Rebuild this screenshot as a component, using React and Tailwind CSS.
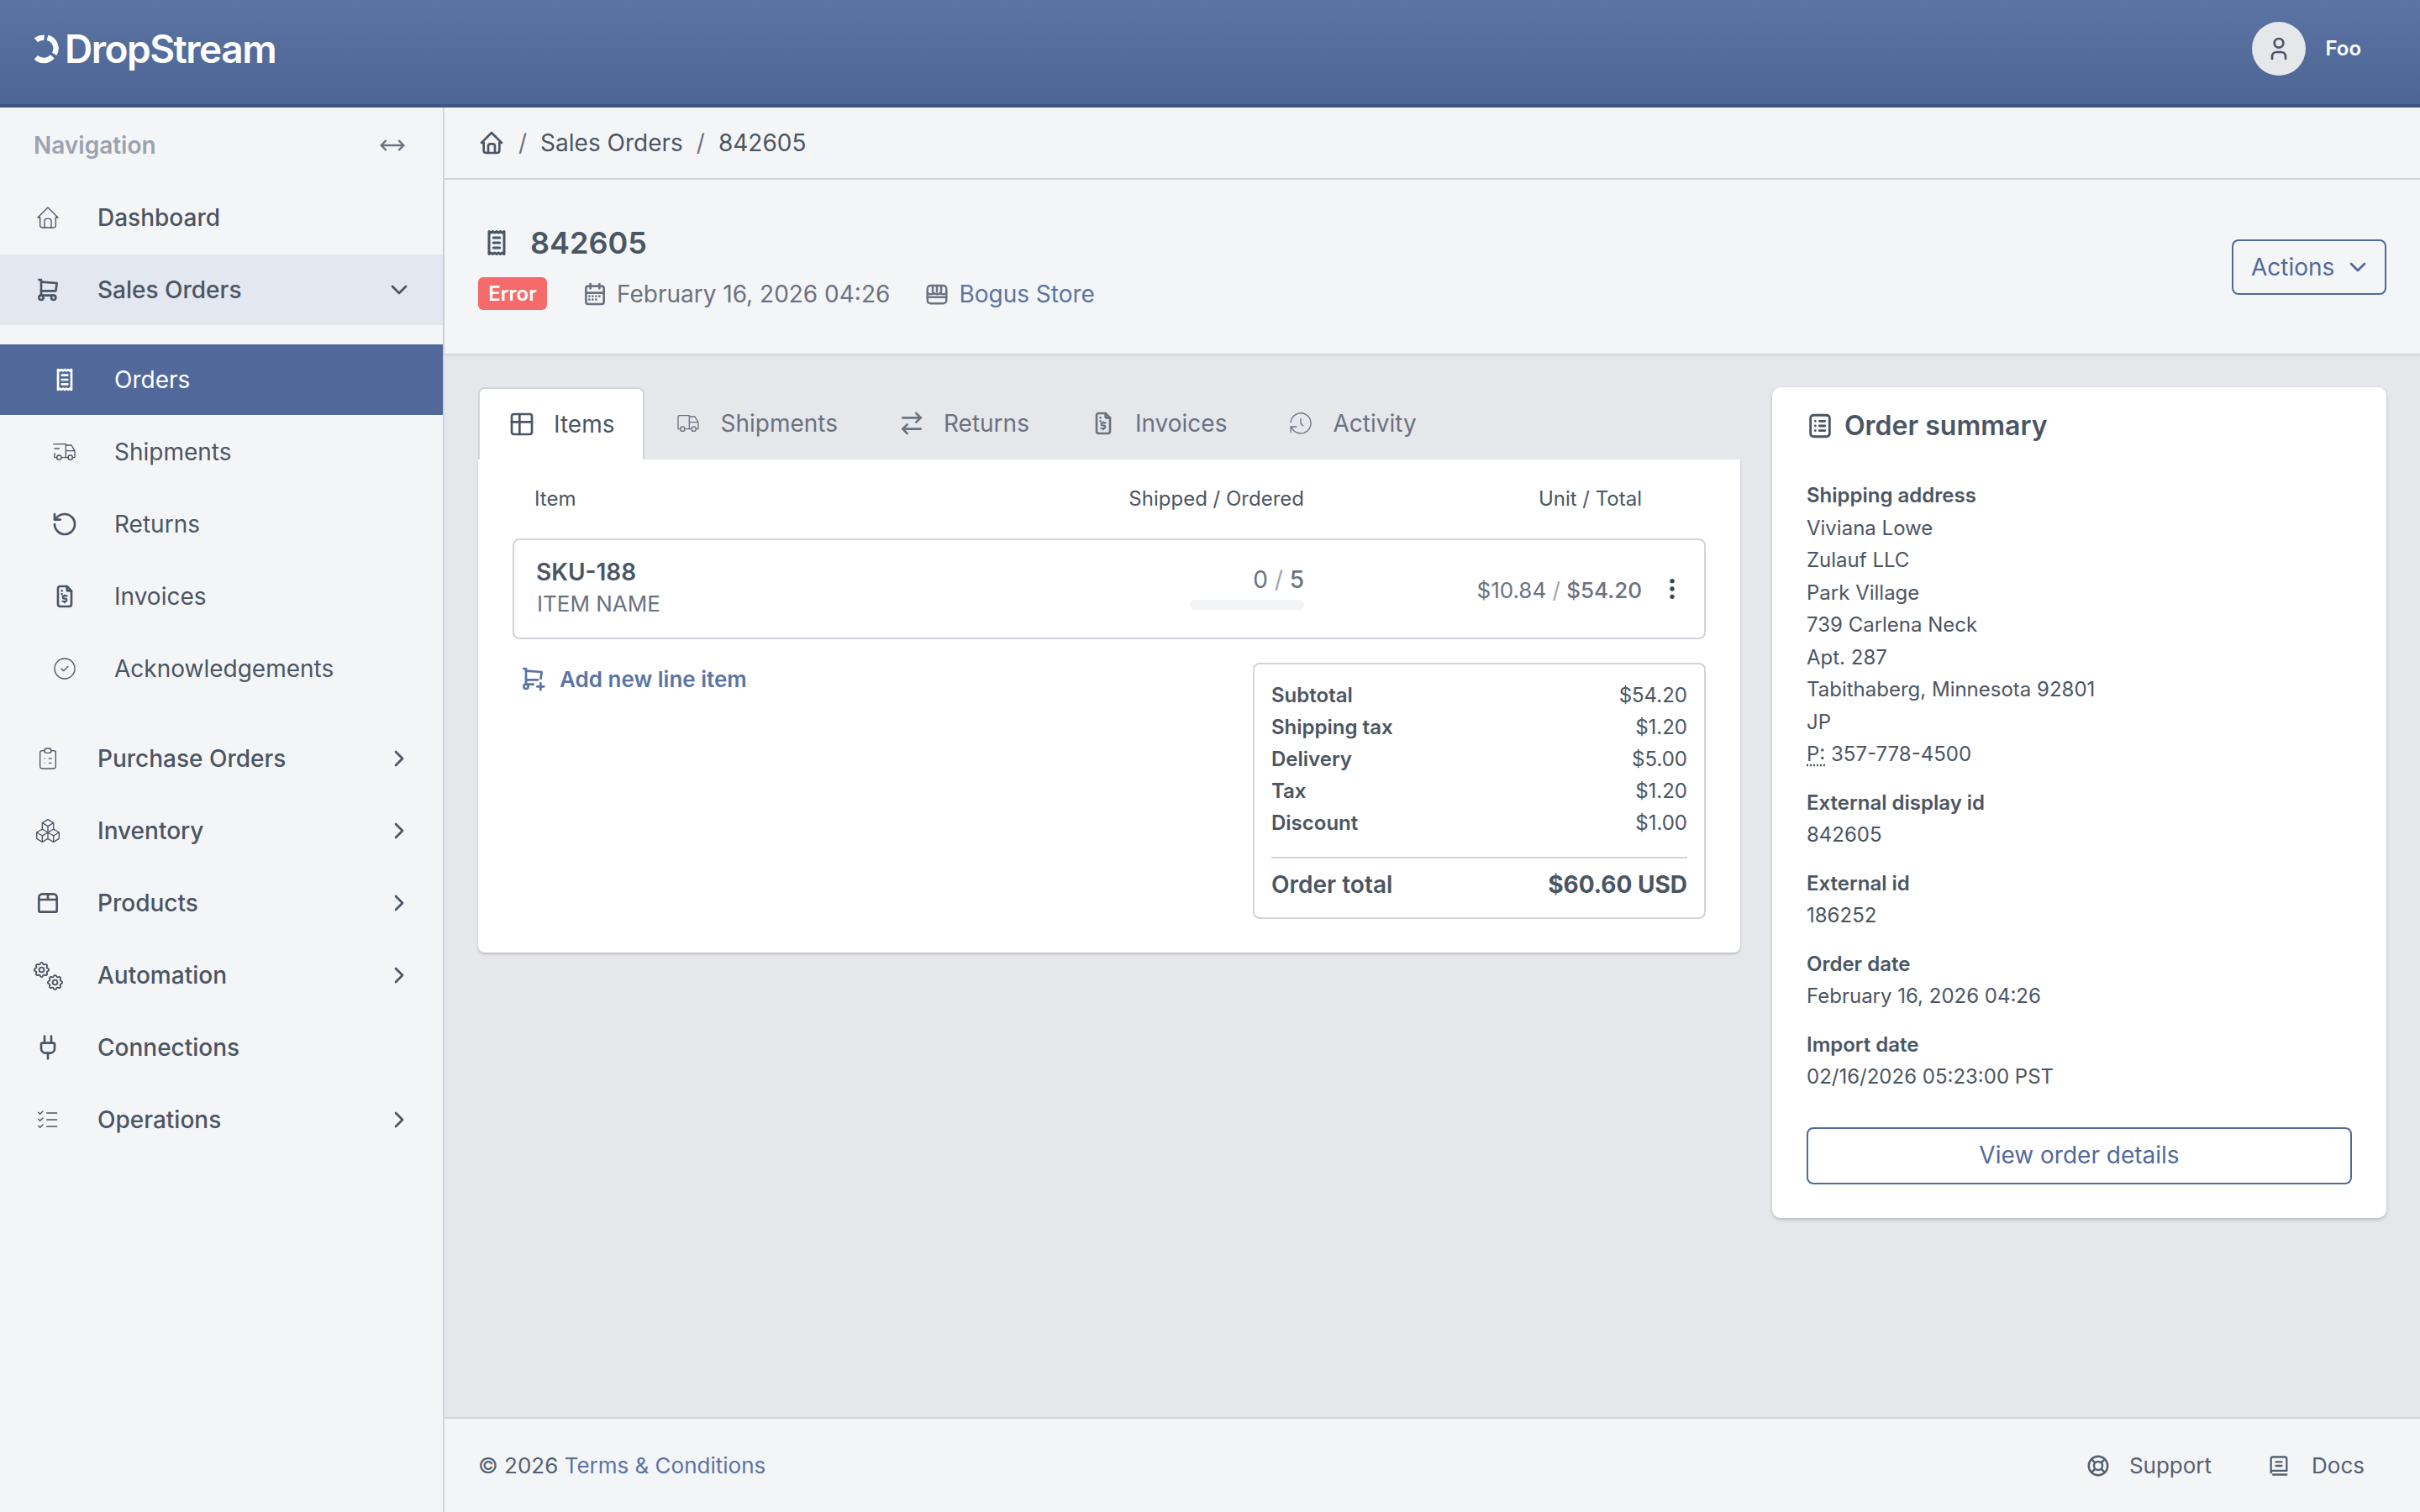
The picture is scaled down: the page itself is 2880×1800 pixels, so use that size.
import {
  TbHome, TbShoppingCart, TbTruckDelivery, TbCircleCheck, TbClipboardList, TbPackages,
  TbListCheck, TbTable, TbTruck, TbHistory, TbCalendarMonth, TbLifebuoy, TbUser,
  TbShoppingCartPlus, TbDotsVertical, TbChevronDown, TbChevronRight, TbSettings,
} from 'react-icons/tb';
import { ArrowRightLeft, MoveHorizontal, Plug, RotateCcw } from 'lucide-react';

// Icons the packages don't have in this exact shape
const Receipt = ({ className }) => (
  <svg viewBox="0 0 24 24" fill="none" stroke="currentColor" strokeWidth="2" strokeLinejoin="round" strokeLinecap="round" className={className}>
    <path d="M6 3l1.5 1L9 3l1.5 1L12 3l1.5 1L15 3l1.5 1L18 3v18l-1.5-1L15 21l-1.5-1L12 21l-1.5-1L9 21l-1.5-1L6 21V3z" />
    <path d="M9.5 8h5M9.5 12h5M9.5 16h5" />
  </svg>
);

const FileInvoice = ({ className }) => (
  <svg viewBox="0 0 24 24" fill="none" stroke="currentColor" strokeWidth="2" strokeLinejoin="round" strokeLinecap="round" className={className}>
    <path d="M14 3H8a2 2 0 0 0-2 2v14a2 2 0 0 0 2 2h8a2 2 0 0 0 2-2V7l-4-4z" />
    <path d="M14 3v3a1 1 0 0 0 1 1h3" />
    <path d="M9.5 7h.01M9.5 10h.01" />
    <path d="M14 11.5h-2.5a1.25 1.25 0 0 0 0 2.5h1a1.25 1.25 0 0 1 0 2.5H10M12 17.5v-.5M12 11.5V11" strokeWidth="1.6" />
  </svg>
);

const ProductBox = ({ className }) => (
  <svg viewBox="0 0 24 24" fill="none" stroke="currentColor" strokeWidth="2" strokeLinejoin="round" strokeLinecap="round" className={className}>
    <path d="M7 4h10a3 3 0 0 1 3 3v12a1 1 0 0 1-1 1H5a1 1 0 0 1-1-1V7a3 3 0 0 1 3-3z" />
    <path d="M4 9h16M12 4v5" />
  </svg>
);

const Gears = ({ className }) => (
  <span className={`relative inline-block ${className}`}>
    <TbSettings className="absolute left-[-3px] top-[-2px] w-[23px] h-[23px]" />
    <TbSettings className="absolute left-[13px] top-[13px] w-[23px] h-[23px]" />
  </span>
);

const Store = ({ className }) => (
  <svg viewBox="0 0 24 24" fill="none" stroke="currentColor" strokeWidth="2" strokeLinejoin="round" strokeLinecap="round" className={className}>
    <rect x="3" y="4" width="18" height="17" rx="3" />
    <path d="M3 11c1.5 1.6 4.5 1.6 6 0 1.500 1.600 4.500 1.600 6 0 1.500 1.600 4.500 1.600 6 0M3 15h18M8 4v6M12 4v6M16 4v6" />
  </svg>
);

const SummaryIcon = ({ className }) => (
  <svg viewBox="0 0 24 24" fill="none" stroke="currentColor" strokeWidth="2" strokeLinejoin="round" strokeLinecap="round" className={className}>
    <rect x="4" y="3" width="16" height="18" rx="2.500" />
    <path d="M8 8h.01M8 12h.01M8 16h.01M11.500 8H16M11.500 12H16M11.500 16H16" />
  </svg>
);

const Book = ({ className }) => (
  <svg viewBox="0 0 24 24" fill="none" stroke="currentColor" strokeWidth="2" strokeLinejoin="round" strokeLinecap="round" className={className}>
    <path d="M6 21h14M20 17H6a2 2 0 0 0-2 2V5a2 2 0 0 1 2-2h12a2 2 0 0 1 2 2v12z" />
    <path d="M9 8h6M9 12h6" />
  </svg>
);

const Logo = () => (
  <svg viewBox="0 0 32 36" className="w-[31px] h-[36px]" fill="none" stroke="white" strokeWidth="6.500">
    <path d="M3 7.500A13.500 13.500 0 0 1 13 4.500" />
    <path d="M17 4.500a13.500 13.500 0 0 1 8.500 20" />
    <path d="M23 27.500A13.500 13.500 0 0 1 3 28.500" />
  </svg>
);

const SALES_CHILDREN = [
  { label: 'Orders', icon: Receipt, active: true },
  { label: 'Shipments', icon: TbTruckDelivery },
  { label: 'Returns', icon: RotateCcw },
  { label: 'Invoices', icon: FileInvoice },
  { label: 'Acknowledgements', icon: TbCircleCheck },
];

const NAV_BOTTOM = [
  { label: 'Purchase Orders', icon: TbClipboardList, chevron: true },
  { label: 'Inventory', icon: TbPackages, chevron: true },
  { label: 'Products', icon: ProductBox, chevron: true },
  { label: 'Automation', icon: Gears, chevron: true },
  { label: 'Connections', icon: Plug },
  { label: 'Operations', icon: TbListCheck, chevron: true },
];

const TABS = [
  { label: 'Shipments', icon: TbTruck },
  { label: 'Returns', icon: ArrowRightLeft },
  { label: 'Invoices', icon: FileInvoice },
  { label: 'Activity', icon: TbHistory },
];

const TOTALS = [
  ['Subtotal', '$54.20'],
  ['Shipping tax', '$1.20'],
  ['Delivery', '$5.00'],
  ['Tax', '$1.20'],
  ['Discount', '$1.00'],
];

const ADDRESS = ['Viviana Lowe', 'Zulauf LLC', 'Park Village', '739 Carlena Neck', 'Apt. 287', 'Tabithaberg, Minnesota 92801', 'JP'];

const DETAILS = [
  ['External display id', '842605'],
  ['External id', '186252'],
  ['Order date', 'February 16, 2026 04:26'],
  ['Import date', '02/16/2026 05:23:00 PST'],
];

function NavRow({ item }) {
  const Icon = item.icon;
  return (
    <div className="flex items-center h-[84px] mb-[2px] pl-[41px] pr-[36px]">
      <Icon className="w-[32px] h-[32px] shrink-0" strokeWidth={item.icon === Plug ? 2 : undefined} />
      <span className="ml-[43px] flex-1">{item.label}</span>
      {item.chevron && <TbChevronRight className="w-[32px] h-[32px]" />}
    </div>
  );
}

function Sidebar() {
  return (
    <aside className="w-[529px] shrink-0 border-r-2 border-[#d1d5db] bg-[#f4f5f7] text-[28px] font-medium text-[#4b5563]">
      <div className="flex items-center justify-between h-[89px] pl-[40px] pr-[44px] text-[#9ca3af] font-semibold">
        <span>Navigation</span>
        <MoveHorizontal className="w-[32px] h-[32px] text-[#6b7280]" strokeWidth={1.75} />
      </div>
      <NavRow item={{ label: 'Dashboard', icon: TbHome }} />
      <div className="flex items-center h-[84px] pl-[41px] pr-[36px] bg-[#e2e7f0]">
        <TbShoppingCart className="w-[32px] h-[32px] shrink-0" />
        <span className="ml-[43px] flex-1">Sales Orders</span>
        <TbChevronDown className="w-[32px] h-[32px]" />
      </div>
      <div className="mt-[23px] mb-[23px] font-normal">
        {SALES_CHILDREN.map((item) => {
          const Icon = item.icon;
          return (
            <div key={item.label} className={`flex items-center h-[84px] mb-[2px] pl-[61px] ${item.active ? 'bg-[#51699a] text-white' : ''}`}>
              <Icon className="w-[32px] h-[32px] shrink-0" strokeWidth={item.icon === RotateCcw ? 2 : undefined} />
              <span className="ml-[43px]">{item.label}</span>
            </div>
          );
        })}
      </div>
      {NAV_BOTTOM.map((item) => <NavRow key={item.label} item={item} />)}
    </aside>
  );
}

function ItemsCard() {
  return (
    <div className="flex-1 min-w-0">
      <div className="flex h-[86px] text-[28px] text-[#6b7280]">
        <div className="flex items-center gap-[22px] px-[34px] bg-white text-[#4b5563] border-2 border-b-0 border-[#d1d5db] rounded-t-[8px]">
          <TbTable className="w-[32px] h-[32px]" />
          Items
        </div>
        {TABS.map((tab) => {
          const Icon = tab.icon;
          return (
            <div key={tab.label} className="flex items-center gap-[22px] px-[36px]">
              <Icon className="w-[32px] h-[32px]" strokeWidth={tab.icon === ArrowRightLeft ? 2 : undefined} />
              {tab.label}
            </div>
          );
        })}
      </div>
      <div className="bg-white rounded-b-[8px] shadow-[0_2px_3px_rgba(0,0,0,0.18)] px-[41px] pb-[40px] text-[#4b5563]">
        <div className="flex items-center h-[94px] pl-[26px] pr-[76px] text-[24px]">
          <span className="flex-1">Item</span>
          <span className="w-[300px] text-right">Shipped / Ordered</span>
          <span className="w-[402px] text-right">Unit / Total</span>
        </div>
        <div className="flex items-center h-[120px] border-2 border-[#d1d5db] rounded-[8px] pl-[26px] pr-[22px]">
          <div className="flex-1">
            <div className="text-[28px] font-semibold leading-[36px]">SKU-188</div>
            <div className="text-[26px] leading-[40px] text-[#6b7280] ml-[1px]">ITEM NAME</div>
          </div>
          <div className="w-[300px] flex flex-col items-end mb-[4px]">
            <div className="text-[28px] text-[#6b7280] leading-[36px]">0 <span className="text-[#9ca3af]">/</span> <span className="font-medium">5</span></div>
            <div className="w-[136px] h-[12px] rounded-full bg-[#f3f4f6] mt-[6px]"></div>
          </div>
          <div className="w-[402px] text-right text-[26px] text-[#6b7280] mt-[2px]">
            $10.84 <span className="text-[#9ca3af]">/</span> <span className="font-medium">$54.20</span>
          </div>
          <div className="w-[52px] flex justify-end">
            <TbDotsVertical className="w-[32px] h-[32px] text-[#374151]" />
          </div>
        </div>
        <div className="flex justify-between mt-[28px]">
          <div className="flex items-center gap-[16px] h-[34px] mt-[2px] pl-[8px] text-[26px] font-semibold text-[#5b74a3]">
            <TbShoppingCartPlus className="w-[32px] h-[32px]" />
            Add new line item
          </div>
          <div className="w-[539px] border-2 border-[#d1d5db] rounded-[8px] px-[20px] pt-[18px] pb-[18px]">
            {TOTALS.map(([label, value]) => (
              <div key={label} className="flex justify-between text-[24px] leading-[38px]">
                <span className="font-semibold">{label}</span>
                <span>{value}</span>
              </div>
            ))}
            <div className="border-t-2 border-[#d1d5db] mt-[21px] pt-[10px] flex justify-between text-[28px] leading-[42px]">
              <span className="font-semibold">Order total</span>
              <span className="font-bold">$60.60 USD</span>
            </div>
          </div>
        </div>
      </div>
    </div>
  );
}

function SummaryCard() {
  return (
    <div className="w-[731px] shrink-0 self-start bg-white rounded-[10px] shadow-[0_2px_4px_rgba(0,0,0,0.2)] px-[41px] pt-[24px] pb-[40px] text-[24px] leading-[38.500px] text-[#4b5563]">
      <div className="flex items-center gap-[12px] h-[44px] mb-[42px] text-[32px] font-semibold">
        <SummaryIcon className="w-[34px] h-[34px] -ml-[1px]" />
        Order summary
      </div>
      <div className="font-semibold">Shipping address</div>
      {ADDRESS.map((line) => <div key={line}>{line}</div>)}
      <div><span className="underline decoration-dotted underline-offset-4">P:</span> 357-778-4500</div>
      {DETAILS.map(([label, value]) => (
        <div key={label} className="mt-[19px]">
          <div className="font-semibold">{label}</div>
          <div>{value}</div>
        </div>
      ))}
      <div className="flex items-center justify-center h-[68px] mt-[40px] border-2 border-[#51699a] rounded-[8px] text-[28px] text-[#51699a]">
        View order details
      </div>
    </div>
  );
}

export default function App() {
  return (
    <div className="flex flex-col h-screen font-['Inter',sans-serif] text-[#4b5563] overflow-hidden">
      <header className="flex items-center justify-between shrink-0 h-[128px] pb-[8px] pl-[40px] pr-[70px] border-b-4 border-[#3f5680] bg-gradient-to-b from-[#5b74a3] to-[#4c6594]">
        <div className="flex items-center gap-[6px]">
          <Logo />
          <span className="text-[46px] font-semibold text-white tracking-[-1.500px] leading-none">DropStream</span>
        </div>
        <div className="flex items-center gap-[23px]">
          <div className="flex items-center justify-center w-[64px] h-[64px] rounded-full bg-[#e5e7eb]">
            <TbUser className="w-[32px] h-[32px] text-[#4b5563]" />
          </div>
          <span className="text-[24px] font-semibold text-white">Foo</span>
        </div>
      </header>
      <div className="flex flex-1 min-h-0">
        <Sidebar />
        <main className="flex flex-col flex-1 min-w-0 bg-[#e5e7eb]">
          <div className="flex items-center h-[86px] pl-[40px] border-b-2 border-[#d1d5db] bg-[#f4f5f7] text-[28px] shrink-0">
            <TbHome className="w-[32px] h-[32px]" />
            <span className="mx-[16px] text-[#6b7280]">/</span>
            <span>Sales Orders</span>
            <span className="mx-[16px] text-[#6b7280]">/</span>
            <span>842605</span>
          </div>
          <div className="flex items-center justify-between shrink-0 h-[207px] pl-[40px] pr-[40px] bg-[#f4f5f7] shadow-[0_2px_3px_rgba(0,0,0,0.1)]">
            <div>
              <div className="flex items-center gap-[22px] h-[48px] ml-[4px] text-[36px] font-semibold">
                <Receipt className="w-[36px] h-[36px]" />
                842605
              </div>
              <div className="flex items-center mt-[16px] text-[28px] text-[#6b7280]">
                <span className="flex items-center justify-center w-[82px] h-[39px] rounded-[6px] bg-[#f56b6b] text-[24px] font-semibold text-white">Error</span>
                <TbCalendarMonth className="w-[32px] h-[32px] ml-[41px]" />
                <span className="ml-[10px]">February 16, 2026 04:26</span>
                <Store className="w-[30px] h-[30px] ml-[41px]" />
                <span className="ml-[11px] text-[#5b74a3]">Bogus Store</span>
              </div>
            </div>
            <div className="flex items-center h-[66px] w-[184px] pl-[21px] gap-[12px] border-2 border-[#51699a] rounded-[8px] text-[28px] text-[#51699a]">
              Actions
              <TbChevronDown className="w-[32px] h-[32px]" />
            </div>
          </div>
          <div className="flex flex-1 min-h-0 gap-[38px] pt-[40px] px-[40px]">
            <ItemsCard />
            <SummaryCard />
          </div>
          <footer className="flex items-center justify-between shrink-0 h-[113px] pl-[40px] pr-[66px] border-t-2 border-[#d1d5db] bg-[#f4f5f7] text-[26px] text-[#566070]">
            <div>© 2026 <span className="text-[#5b74a3]">Terms &amp; Conditions</span></div>
            <div className="flex items-center">
              <TbLifebuoy className="w-[30px] h-[30px]" />
              <span className="ml-[22px]">Support</span>
              <Book className="w-[28px] h-[28px] ml-[66px]" />
              <span className="ml-[25px]">Docs</span>
            </div>
          </footer>
        </main>
      </div>
    </div>
  );
}
